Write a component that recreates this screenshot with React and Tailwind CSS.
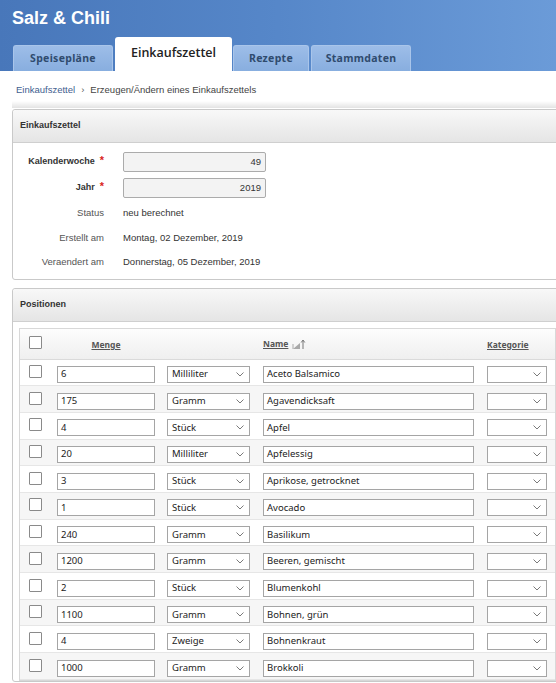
const rows = [
  ["6", "Milliliter", "Aceto Balsamico"],
  ["175", "Gramm", "Agavendicksaft"],
  ["4", "Stück", "Apfel"],
  ["20", "Milliliter", "Apfelessig"],
  ["3", "Stück", "Aprikose, getrocknet"],
  ["1", "Stück", "Avocado"],
  ["240", "Gramm", "Basilikum"],
  ["1200", "Gramm", "Beeren, gemischt"],
  ["2", "Stück", "Blumenkohl"],
  ["1100", "Gramm", "Bohnen, grün"],
  ["4", "Zweige", "Bohnenkraut"],
  ["1000", "Gramm", "Brokkoli"],
];

function Chevron() {
  return (
    <svg width="8" height="5" viewBox="0 0 8 5" className="shrink-0">
      <path d="M0.5 0.5 L4 4 L7.5 0.5" fill="none" stroke="#7a7a7a" strokeWidth="1" />
    </svg>
  );
}

function Checkbox() {
  return <div className="w-[13px] h-[13px] shrink-0 border border-[#8a8a8a] bg-white rounded-[1px]" />;
}

function Tab({ children, className }) {
  return (
    <div
      className={
        "h-[26px] flex items-center justify-center rounded-t-[3px] bg-linear-to-b from-[#9dbde8] to-[#88aedf] border-t border-x border-[#a9c5ea] text-[10.5px] font-bold tracking-[0.3px] text-[#2f4b6e] font-['Noto_Sans',sans-serif] " +
        className
      }
    >
      {children}
    </div>
  );
}

function PanelHeader({ children }) {
  return (
    <div className="h-[33px] border-b border-[#cfcfcf] bg-linear-to-b from-[#f8f8f8] to-[#e5e5e5] flex items-center pl-[7px] text-[9px] font-bold text-[#333] rounded-t-[3px]">
      {children}
    </div>
  );
}

function FormInputRow({ label, value }) {
  return (
    <div className="flex items-center h-[26px]">
      <div className="w-[91px] flex justify-end items-start text-[9px] font-bold text-[#333]">
        <span>{label}</span>
        <span className="ml-[5px] text-[#d9261c] text-[11px] leading-[10px]">*</span>
      </div>
      <div className="ml-[19px] w-[143px] h-[20px] border border-[#ababab] bg-[#f3f3f3] rounded-[2px] flex items-center justify-end pr-[4px] text-[9.5px] text-[#333]">
        {value}
      </div>
    </div>
  );
}

function FormTextRow({ label, value }) {
  return (
    <div className="flex items-center h-[24.5px]">
      <div className="w-[91px] text-right text-[9.5px] text-[#555]">{label}</div>
      <div className="ml-[19px] text-[9.5px] text-[#333]">{value}</div>
    </div>
  );
}

function Box({ className, children }) {
  return (
    <div
      className={
        "h-[17px] border border-[#a5a5a5] bg-white flex items-center text-[9.5px] text-[#222] font-['Noto_Sans',sans-serif] " +
        className
      }
    >
      {children}
    </div>
  );
}

function SortIcon() {
  return (
    <svg width="14" height="11" viewBox="0 0 14 11" className="ml-[4px]">
      <polygon points="1,10 8,10 8,4" fill="#a8a8a8" />
      <line x1="1" y1="5" x2="1" y2="10" stroke="#a8a8a8" strokeWidth="1" />
      <line x1="11" y1="10" x2="11" y2="1.5" stroke="#777" strokeWidth="1" />
      <path d="M9.2 3.5 L11 1 L12.8 3.5" fill="none" stroke="#777" strokeWidth="1" />
    </svg>
  );
}

export default function App() {
  return (
    <div className="w-[556px] h-[683px] overflow-hidden bg-white font-['Liberation_Sans',Arial,sans-serif] text-[#333]">
      {/* Header */}
      <div className="h-[71px] bg-linear-to-r from-[#4877ba] via-[#5687c9] to-[#6b9bd8] flex flex-col">
        <div className="h-[37px] pl-[12px] pt-[7px] text-white font-bold text-[18px] leading-[22px]">
          Salz &amp; Chili
        </div>
        <div className="h-[34px] flex items-end pl-[13px]">
          <Tab className="w-[100px]">Speisepläne</Tab>
          <div className="ml-[2px] w-[117px] h-[34px] bg-white rounded-t-[3px] flex items-center justify-center pb-[2px] text-[12.5px] font-semibold text-[#222] font-['Open_Sans',sans-serif]">
            Einkaufszettel
          </div>
          <Tab className="ml-[1px] w-[76px]">Rezepte</Tab>
          <Tab className="ml-[2px] w-[100px]">Stammdaten</Tab>
        </div>
      </div>

      {/* Breadcrumb */}
      <div className="h-[30px] pl-[16px] pt-[13px] text-[9.5px] leading-[12px] flex">
        <span className="text-[#3f5e8f]">Einkaufszettel</span>
        <span className="mx-[6px] text-[#555]">›</span>
        <span className="text-[#444]">Erzeugen/Ändern eines Einkaufszettels</span>
      </div>
      <div className="ml-[12px] h-[7px] bg-linear-to-b from-white to-[#e3e3e3]" />

      {/* Panel 1 */}
      <div className="mt-[1px] ml-[12px] w-[560px] border border-[#c9c9c9] rounded-[3px]">
        <PanelHeader>Einkaufszettel</PanelHeader>
        <div className="pt-[6px] pb-[4px]">
          <FormInputRow label="Kalenderwoche" value="49" />
          <FormInputRow label="Jahr" value="2019" />
          <FormTextRow label="Status" value="neu berechnet" />
          <FormTextRow label="Erstellt am" value="Montag, 02 Dezember, 2019" />
          <FormTextRow label="Veraendert am" value="Donnerstag, 05 Dezember, 2019" />
        </div>
      </div>

      {/* Panel 2 */}
      <div className="mt-[8px] ml-[12px] w-[560px] border border-[#c9c9c9] rounded-[3px]">
        <PanelHeader>Positionen</PanelHeader>
        <div className="pl-[6px] pt-[6px]">
          <div className="w-[537px] border border-[#d8d8d8]">
            {/* table header */}
            <div className="h-[31px] flex items-center pl-[9px] bg-linear-to-b from-[#fdfdfd] to-[#efefef] border-b border-[#dadada] font-['Noto_Sans',sans-serif] text-[8.5px] font-bold text-[#555]">
              <div className="mb-[2px]">
                <Checkbox />
              </div>
              <div className="ml-[15px] w-[98px] text-center underline mt-[4px]">Menge</div>
              <div className="ml-[12px] w-[83px]" />
              <div className="ml-[13px] w-[211px] flex items-center mt-[2px]">
                <span className="underline">Name</span>
                <SortIcon />
              </div>
              <div className="ml-[13px] underline mt-[4px]">Kategorie</div>
            </div>
            {rows.map((r, i) => (
              <div
                key={i}
                className={
                  "h-[26.7px] flex items-start pl-[9px] border-b border-[#e6e6e6] " +
                  (i % 2 === 1 ? "bg-[#f6f6f6]" : "bg-white")
                }
              >
                <div className="mt-[5.5px]">
                  <Checkbox />
                </div>
                <Box className="ml-[15px] w-[98px] mt-[6.5px] pl-[3px]">{r[0]}</Box>
                <Box className="ml-[12px] w-[83px] mt-[6.5px] pl-[4px] pr-[5px] justify-between">
                  <span>{r[1]}</span>
                  <Chevron />
                </Box>
                <Box className="ml-[13px] w-[211px] mt-[6.5px] pl-[3px]">{r[2]}</Box>
                <Box className="ml-[13px] w-[60px] mt-[6.5px] pr-[5px] justify-end">
                  <Chevron />
                </Box>
              </div>
            ))}
          </div>
        </div>
      </div>
    </div>
  );
}
